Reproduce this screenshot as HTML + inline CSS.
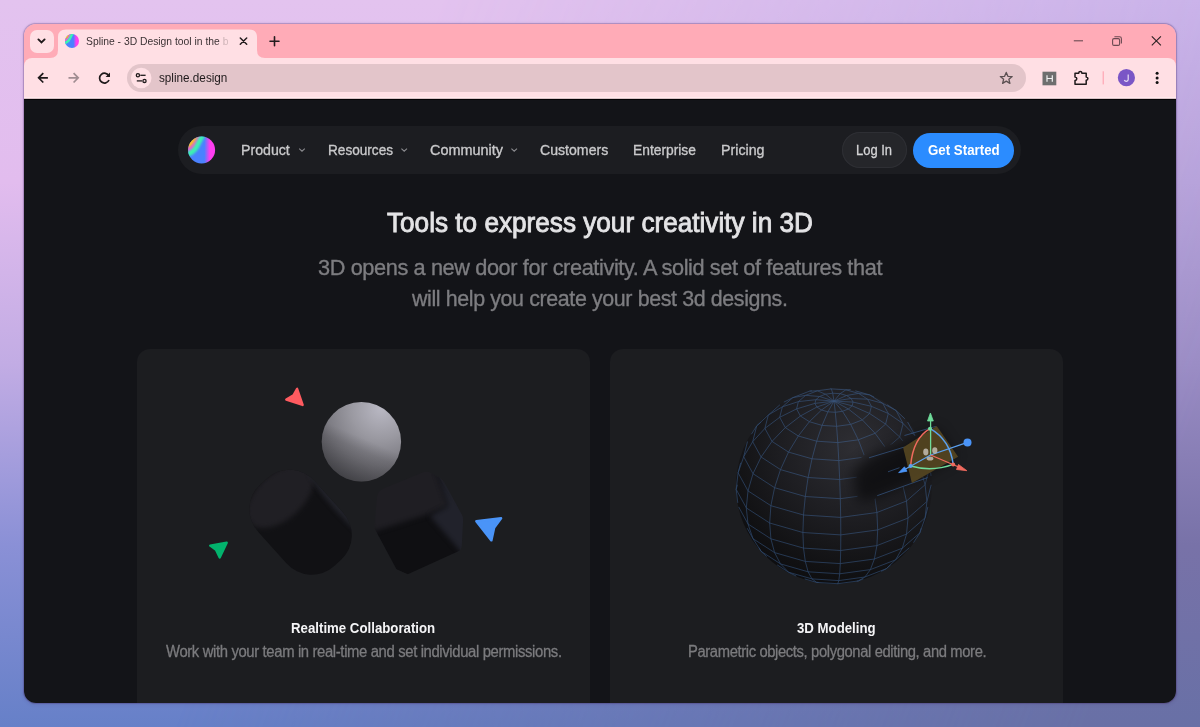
<!DOCTYPE html><html><head><meta charset="utf-8"><style>
html,body{margin:0;padding:0;width:1200px;height:727px;overflow:hidden;font-family:"Liberation Sans",sans-serif;}
.abs{position:absolute;}
.t{position:absolute;white-space:nowrap;transform-origin:0 0;}
#bgL{position:absolute;left:0;top:0;width:1200px;height:727px;background:linear-gradient(to bottom,#e3c3ef 0%,#e2bcee 25%,#c2ace4 50%,#8a90d6 75%,#6680c8 100%);}
#bgR{position:absolute;left:0;top:0;width:1200px;height:727px;background:linear-gradient(to bottom,#c5b0e8 0%,#b2a0d8 25%,#9a8cc4 50%,#7872a8 75%,#6870a6 100%);-webkit-mask-image:linear-gradient(110deg,transparent 30%,#000 92%);mask-image:linear-gradient(110deg,transparent 30%,#000 92%);}
#shadow{position:absolute;left:24px;top:24px;width:1152px;height:679px;border-radius:12px;box-shadow:0 0 1px 0.5px rgba(70,40,100,.3),0 1px 4px rgba(60,40,90,.15);}
#win{position:absolute;left:0;top:0;width:1200px;height:727px;clip-path:inset(24px 24px 24px 24px round 12px);}
#tabstrip{left:24px;top:24px;width:1152px;height:44px;background:#ffabb7;}
#toolbar{left:24px;top:58px;width:1152px;height:41px;border-radius:8px 8px 0 0;background:linear-gradient(to bottom,#ffdfe4 0,#ffdfe4 39px,#ffe9ec 39px,#ffe9ec 40px,#d8c0c4 40px);}
#content{left:24px;top:99px;width:1152px;height:604px;background:#131418;border-top:1px solid #030304;box-sizing:border-box;}
#addr{left:127px;top:64px;width:899px;height:28px;border-radius:14px;background:#e3c5ca;}
#nav{left:177.5px;top:126px;width:843.5px;height:48px;border-radius:24px;background:#1c1d21;}
.card{position:absolute;top:349px;width:453px;height:400px;border-radius:13px;background:#1c1d20;}
</style></head><body><div id="bgL"></div><div id="bgR"></div><div id="shadow"></div><div id="win"><div id="tabstrip" class="abs"></div><div class="abs" style="left:30px;top:29.5px;width:23.5px;height:23.5px;border-radius:7px;background:#ffdfe4;"></div><svg class="abs" style="left:0;top:0" width="300" height="100"><path d="M38.4 39.4 L41.5 42.5 L44.6 39.4" fill="none" stroke="#1f1a1b" stroke-width="1.9" stroke-linecap="round" stroke-linejoin="miter"/></svg><svg class="abs" style="left:0;top:0" width="300" height="100"><path d="M50 58 Q58 58 58 50 L58 37 Q58 29.5 66 29.5 L249 29.5 Q257 29.5 257 37 L257 50 Q257 58 265 58 Z" fill="#ffdfe4"/></svg><div id="toolbar" class="abs"></div><div id="content" class="abs"></div><div id="addr" class="abs"></div><div id="nav" class="abs"></div><div class="card" style="left:137px"></div><div class="card" style="left:610px"></div></div><svg class="abs" style="left:0;top:0" width="1200" height="100"><defs><linearGradient id="fvg" x1="0" y1="0" x2="1" y2="0"><stop offset="0.6" stop-color="#4a82ff"/><stop offset="0.8" stop-color="#ff3ef0"/></linearGradient><clipPath id="fvc"><circle cx="201.6" cy="50" r="13.5"/></clipPath><filter id="fvb" color-interpolation-filters="sRGB"><feGaussianBlur stdDeviation="0.9"/></filter></defs><g transform="translate(72 41) scale(0.52) translate(-201.6 -50)"><circle cx="201.6" cy="50" r="13.5" fill="url(#fvg)"/><g clip-path="url(#fvc)"><g filter="url(#fvb)"><path d="M184 49 Q190 48 193.5 43 Q196 39 199 33 L184 33 Z" fill="#ffc21a"/><path d="M184.5 50.5 Q191.5 49 195 44 Q197.5 40 200.5 34" stroke="#ff4fd8" stroke-width="3" fill="none"/><path d="M184.5 55 Q193 53.5 196.8 46.5 Q199.5 40.5 203.5 34" stroke="#3cf2b2" stroke-width="5" fill="none"/></g></g></g><path d="M240.3 38 L246.7 44.3 M246.7 38 L240.3 44.3" stroke="#231c1e" stroke-width="1.5" stroke-linecap="round"/><path d="M270 41.2 L279 41.2 M274.5 36.7 L274.5 45.7" stroke="#231c1e" stroke-width="1.6" stroke-linecap="round"/><path d="M1073.8 40.8 L1083 40.8" stroke="#6b4a52" stroke-width="1.1"/><rect x="1112.6" y="38.6" width="7" height="6.8" rx="1.4" fill="none" stroke="#6b4a52" stroke-width="1.1"/><path d="M1114.4 36.8 L1119.5 36.8 Q1121.4 36.8 1121.4 38.7 L1121.4 43.6" fill="none" stroke="#6b4a52" stroke-width="1.1"/><path d="M1151.8 36.4 L1160.9 45.4 M1160.9 36.4 L1151.8 45.4" stroke="#2a2022" stroke-width="1.1"/><path d="M38.3 77.8 L47.9 77.8 M43.3 73.2 L38.6 77.8 L43.3 82.5" fill="none" stroke="#1f1a1b" stroke-width="1.7" stroke-linejoin="miter"/><path d="M68.5 77.8 L78.4 77.8 M73.6 73.2 L78.2 77.8 L73.6 82.5" fill="none" stroke="#a18d92" stroke-width="1.7"/><path d="M108.9 76 A4.9 4.9 0 1 0 109 80" fill="none" stroke="#1f1a1b" stroke-width="1.7"/><path d="M110 72.6 L110 77 L105.6 77 Z" fill="#1f1a1b"/><circle cx="141.2" cy="78" r="10.3" fill="#ffe0e5"/><circle cx="137.9" cy="75.3" r="1.6" fill="none" stroke="#1f1a1b" stroke-width="1.3"/><path d="M140.3 75.3 L145.6 75.3" stroke="#1f1a1b" stroke-width="1.3"/><circle cx="144.5" cy="80.9" r="1.6" fill="none" stroke="#1f1a1b" stroke-width="1.3"/><path d="M136.8 80.9 L142.1 80.9" stroke="#1f1a1b" stroke-width="1.3"/><path d="M1006.25 72.4 L1007.9 76.3 L1012.2 76.6 L1008.9 79.3 L1009.9 83.4 L1006.25 81.1 L1002.6 83.4 L1003.6 79.3 L1000.3 76.6 L1004.6 76.3 Z" fill="none" stroke="#5b5052" stroke-width="1.3" stroke-linejoin="round"/><rect x="1042.5" y="71.7" width="13.8" height="13.6" fill="#6e6e6e"/><path d="M1047 75.2 L1047 81.8 M1052.3 75.2 L1052.3 81.8 M1047 78.5 L1052.3 78.5" stroke="#f2f2f2" stroke-width="1.2"/><path d="M1075 73.3 L1078.6 73.3 Q1078.8 71.6 1080.3 71.6 Q1081.8 71.6 1082 73.3 L1086.2 73.3 L1086.2 76.9 Q1087.9 77.1 1087.9 78.6 Q1087.9 80.1 1086.2 80.3 L1086.2 84.3 L1075 84.3 L1075 80.6 Q1076.8 80.4 1076.8 78.8 Q1076.8 77.2 1075 77 Z" fill="none" stroke="#1f1a1b" stroke-width="1.5" stroke-linejoin="round"/><path d="M1103.2 71.3 L1103.2 84.4" stroke="#ff9aaa" stroke-width="1"/><circle cx="1126.4" cy="77.7" r="8.6" fill="#7a56c6"/><path d="M1128.2 74.4 L1128.2 79.6 Q1128.2 81.3 1126.4 81.3 Q1124.8 81.3 1124.4 80" fill="none" stroke="#e6dcf4" stroke-width="1.2"/><circle cx="1157.1" cy="73.2" r="1.5" fill="#111"/><circle cx="1157.1" cy="77.9" r="1.5" fill="#111"/><circle cx="1157.1" cy="82.6" r="1.5" fill="#111"/></svg><span class="t" style="left:85.60px;top:35.46px;font-size:11.63px;line-height:11.63px;font-weight:normal;color:#3b3234;letter-spacing:0px;transform:scaleX(0.8884);-webkit-mask-image:linear-gradient(to right,#000 93%,rgba(0,0,0,.3) 96%,rgba(0,0,0,.2) 100%);">Spline - 3D Design tool in the b</span><span class="t" style="left:158.80px;top:71.85px;font-size:12.94px;line-height:12.94px;font-weight:normal;color:#1f1a1b;letter-spacing:0px;transform:scaleX(0.9054);">spline.design</span><div class="abs" style="left:842px;top:132px;width:65px;height:36px;border-radius:18px;background:#25262a;box-shadow:inset 0 0 0 1px #2e2f34;"></div><div class="abs" style="left:913px;top:133px;width:101px;height:34.5px;border-radius:17.25px;background:#2b8cff;"></div><svg class="abs" style="left:0;top:100px" width="1200" height="100"><defs><linearGradient id="lgg" x1="0" y1="0" x2="1" y2="0"><stop offset="0.6" stop-color="#4a82ff"/><stop offset="0.8" stop-color="#ff3ef0"/></linearGradient><clipPath id="lgc"><circle cx="201.6" cy="50" r="13.5"/></clipPath><filter id="lgb" color-interpolation-filters="sRGB"><feGaussianBlur stdDeviation="0.9"/></filter></defs><circle cx="201.6" cy="50" r="13.5" fill="url(#lgg)"/><g clip-path="url(#lgc)"><g filter="url(#lgb)"><path d="M184 49 Q190 48 193.5 43 Q196 39 199 33 L184 33 Z" fill="#ffc21a"/><path d="M184.5 50.5 Q191.5 49 195 44 Q197.5 40 200.5 34" stroke="#ff4fd8" stroke-width="3" fill="none"/><path d="M184.5 55 Q193 53.5 196.8 46.5 Q199.5 40.5 203.5 34" stroke="#3cf2b2" stroke-width="5" fill="none"/></g></g><path d="M299.2 48.6 L302 51.2 L304.8 48.6 M401.4 48.6 L404.2 51.2 L407 48.6 M511.4 48.6 L514.2 51.2 L517 48.6" fill="none" stroke="#8a8a8e" stroke-width="1.1"/></svg><span class="t" style="left:927.60px;top:143.13px;font-size:14.97px;line-height:14.97px;font-weight:bold;color:#ffffff;letter-spacing:0px;transform:scaleX(0.8885);">Get Started</span><svg class="abs" style="left:0;top:0" width="600" height="703"><defs><radialGradient id="sph" cx="0.75" cy="0.08" r="1.1" fx="0.75" fy="0.08"><stop offset="0" stop-color="#b9b8c3"/><stop offset="0.35" stop-color="#9a99a1"/><stop offset="0.65" stop-color="#7a7980"/><stop offset="1" stop-color="#4c4c52"/></radialGradient><linearGradient id="sphov" x1="0.7" y1="0.04" x2="0.3" y2="0.96"><stop offset="0.45" stop-color="#000" stop-opacity="0"/><stop offset="0.6" stop-color="#000" stop-opacity="0.12"/><stop offset="1" stop-color="#000" stop-opacity="0.26"/></linearGradient><filter id="b2" color-interpolation-filters="sRGB" x="-50%" y="-50%" width="200%" height="200%"><feGaussianBlur stdDeviation="2.5"/></filter><filter id="b05" color-interpolation-filters="sRGB" x="-50%" y="-50%" width="200%" height="200%"><feGaussianBlur stdDeviation="0.5"/></filter><filter id="b1" color-interpolation-filters="sRGB" x="-50%" y="-50%" width="200%" height="200%"><feGaussianBlur stdDeviation="0.8"/></filter><filter id="b6" color-interpolation-filters="sRGB" x="-50%" y="-50%" width="200%" height="200%"><feGaussianBlur stdDeviation="6"/></filter><mask id="cubem"><polygon points="426.2,482.9 434.8,487.7 452.1,519.8 450.8,544.3 410.0,563.4 401.3,559.5 385.4,527.0 387.9,498.7" fill="#fff" stroke="#fff" stroke-width="22" stroke-linejoin="round"/></mask></defs><circle cx="361.4" cy="441.7" r="39.7" fill="url(#sph)"/><circle cx="361.4" cy="441.7" r="39.7" fill="url(#sphov)"/><g filter="url(#b05)"><g transform="translate(300.6 522.2) rotate(48)"><clipPath id="cylc"><rect x="-55" y="-38" width="110" height="76" rx="34" ry="33"/></clipPath><rect x="-55" y="-38" width="110" height="76" rx="34" ry="33" fill="#111114"/><g clip-path="url(#cylc)"><ellipse cx="-33" cy="-2" rx="23" ry="40" fill="#201f24" filter="url(#b2)"/><ellipse cx="15" cy="-40" rx="45" ry="6" fill="#25262e" opacity="0.9" filter="url(#b2)"/></g></g></g><g filter="url(#b05)"><g mask="url(#cubem)"><polygon points="428.3,472.1 439.4,477.7 463.1,518.8 460.0,550.4 407.7,574.2 396.6,569.4 374.5,528.3 379.2,491.9" fill="#0f0f12"/><polygon points="368,488 432,462 448,506 428,514 372,532" fill="#1f1e23" filter="url(#b2)"/><polygon points="436,470 472,520 468,560 430,516 448,506" fill="#21222b" filter="url(#b2)"/></g></g><polygon points="297.1,388.8 293.5,395.3 286.3,399.6 302.6,404.9" fill="#ff5b60" stroke="#ff5b60" stroke-width="2.4" stroke-linejoin="round"/><polygon points="210.2,545.6 226.7,542.7 219.7,557.4 216.0,549.8" fill="#03b36d" stroke="#03b36d" stroke-width="2.4" stroke-linejoin="round"/><polygon points="476.3,521.2 501.1,518.3 494.1,527.9 491.4,540.4" fill="#4a94f8" stroke="#4a94f8" stroke-width="2.4" stroke-linejoin="round"/></svg><svg class="abs" style="left:600px;top:350px" width="400" height="260" viewBox="600 350 400 260"><defs><radialGradient id="wsph" cx="0.6" cy="0.3" r="0.8"><stop offset="0" stop-color="#2e2e33"/><stop offset="0.45" stop-color="#1e1e22"/><stop offset="0.8" stop-color="#111113"/><stop offset="1" stop-color="#0b0b0d"/></radialGradient><filter id="wb4" color-interpolation-filters="sRGB" x="-50%" y="-50%" width="200%" height="200%"><feGaussianBlur stdDeviation="6.5"/></filter><filter id="wb1" color-interpolation-filters="sRGB" x="-50%" y="-50%" width="200%" height="200%"><feGaussianBlur stdDeviation="0.6"/></filter><mask id="occ"><rect x="600" y="350" width="400" height="260" fill="#fff"/><polygon points="856,462 868,452 905,440 937,426 958,457 912,483 878,497 858,508" fill="#000" filter="url(#wb1)"/></mask></defs><circle cx="834" cy="486" r="98" fill="url(#wsph)"/><path d="M835.3 412.3L842.5 411.3M842.5 411.3L848.4 409.0M848.4 409.0L852.1 405.8M852.1 405.8L853.1 402.1M853.1 402.1L851.1 398.5M851.1 398.5L846.5 395.5M846.5 395.5L840.1 393.7M840.1 393.7L832.7 393.2M832.7 393.2L825.5 394.2M825.5 394.2L819.6 396.5M819.6 396.5L815.9 399.7M815.9 399.7L814.9 403.4M814.9 403.4L816.9 407.0M816.9 407.0L821.5 410.0M821.5 410.0L827.9 411.8M827.9 411.8L835.3 412.3M836.6 426.3L850.7 424.4M850.7 424.4L862.3 419.9M862.3 419.9L869.6 413.5M869.6 413.5L871.4 406.3M871.4 406.3L867.6 399.2M867.6 399.2L858.6 393.4M858.6 393.4L845.9 389.8M845.9 389.8L831.4 388.9M831.4 388.9L817.3 390.8M817.3 390.8L805.7 395.3M805.7 395.3L798.4 401.6M798.4 401.6L796.6 408.9M796.6 408.9L800.4 416.0M800.4 416.0L809.4 421.7M809.4 421.7L822.1 425.4M822.1 425.4L836.6 426.3M837.8 442.6L858.3 439.8M858.3 439.8L875.1 433.3M875.1 433.3L885.6 424.1M885.6 424.1L888.3 413.5M888.3 413.5L882.7 403.3M882.7 403.3L869.7 394.9M869.7 394.9L855.3 390.8M812.0 390.8L809.7 391.1M809.7 391.1L792.9 397.6M792.9 397.6L782.4 406.8M782.4 406.8L779.7 417.3M779.7 417.3L785.3 427.6M785.3 427.6L798.3 436.0M798.3 436.0L816.7 441.2M816.7 441.2L837.8 442.6M838.8 460.6L864.9 457.0M864.9 457.0L886.3 448.7M886.3 448.7L899.7 437.0M899.7 437.0L903.1 423.6M903.1 423.6L896.0 410.5M896.0 410.5L887.2 404.8M779.9 404.8L768.3 415.0M768.3 415.0L764.9 428.4M764.9 428.4L772.0 441.4M772.0 441.4L788.5 452.1M788.5 452.1L812.0 458.8M812.0 458.8L838.8 460.6M839.7 479.5L870.4 475.3M870.4 475.3L895.5 465.6M895.5 465.6L911.3 451.8M911.3 451.8L915.3 436.0M915.3 436.0L907.6 422.0M761.2 422.0L756.7 425.9M756.7 425.9L752.7 441.7M752.7 441.7L761.1 457.0M761.1 457.0L780.5 469.6M780.5 469.6L808.1 477.5M808.1 477.5L839.7 479.5M840.3 498.7L874.4 494.0M874.4 494.0L902.3 483.2M902.3 483.2L919.9 467.9M919.9 467.9L924.3 450.4M924.3 450.4L919.5 441.5M747.5 441.5L743.7 456.7M743.7 456.7L753.0 473.7M753.0 473.7L774.6 487.7M774.6 487.7L805.3 496.5M805.3 496.5L840.3 498.7M840.7 517.4L876.9 512.5M876.9 512.5L906.5 501.0M906.5 501.0L925.1 484.7M925.1 484.7L929.9 466.1M929.9 466.1L928.1 462.8M740.7 462.8L738.1 472.8M738.1 472.8L748.0 490.9M748.0 490.9L770.9 505.7M770.9 505.7L803.5 515.0M803.5 515.0L840.7 517.4M840.8 534.9L877.7 529.9M877.7 529.9L908.0 518.1M908.0 518.1L926.9 501.5M926.9 501.5L931.2 484.8M737.4 484.8L736.2 489.4M736.2 489.4L746.3 507.9M746.3 507.9L769.7 523.0M769.7 523.0L802.9 532.5M802.9 532.5L840.8 534.9M840.7 550.5L876.9 545.6M876.9 545.6L906.5 534.1M906.5 534.1L925.1 517.8M925.1 517.8L927.9 506.9M738.7 506.9L748.0 524.0M748.0 524.0L770.9 538.8M770.9 538.8L803.5 548.1M803.5 548.1L840.7 550.5M840.3 563.6L874.4 559.0M874.4 559.0L902.3 548.2M902.3 548.2L919.9 532.8M919.9 532.8L921.1 528.2M747.2 528.2L753.0 538.7M753.0 538.7L774.6 552.6M774.6 552.6L805.3 561.4M805.3 561.4L840.3 563.6M839.7 573.8L870.4 569.6M870.4 569.6L895.5 559.9M895.5 559.9L909.4 547.7M759.1 547.7L761.1 551.3M761.1 551.3L780.5 563.9M780.5 563.9L808.1 571.8M808.1 571.8L839.7 573.8M838.8 580.6L864.9 577.0M864.9 577.0L886.3 568.7M886.3 568.7L890.7 564.9M777.2 564.9L788.5 572.2M788.5 572.2L812.0 578.9M812.0 578.9L838.8 580.6M837.8 583.7L858.3 580.9M858.3 580.9L863.4 578.9M804.7 578.9L816.7 582.4M816.7 582.4L837.8 583.7M834.0 401.1L835.3 412.3M835.3 412.3L836.6 426.3M836.6 426.3L837.8 442.6M837.8 442.6L838.8 460.6M838.8 460.6L839.7 479.5M839.7 479.5L840.3 498.7M840.3 498.7L840.7 517.4M840.7 517.4L840.8 534.9M840.8 534.9L840.7 550.5M840.7 550.5L840.3 563.6M840.3 563.6L839.7 573.8M839.7 573.8L838.8 580.6M838.8 580.6L837.8 583.7M837.8 583.7L837.3 583.5M834.0 401.1L842.5 411.3M842.5 411.3L850.7 424.4M850.7 424.4L858.3 439.8M858.3 439.8L864.9 457.0M864.9 457.0L870.4 475.3M870.4 475.3L874.4 494.0M874.4 494.0L876.9 512.5M876.9 512.5L877.7 529.9M877.7 529.9L876.9 545.6M876.9 545.6L874.4 559.0M874.4 559.0L870.4 569.6M870.4 569.6L864.9 577.0M864.9 577.0L858.3 580.9M858.3 580.9L856.8 581.0M834.0 401.1L848.4 409.0M848.4 409.0L862.3 419.9M862.3 419.9L875.1 433.3M875.1 433.3L886.3 448.7M886.3 448.7L895.5 465.6M895.5 465.6L902.3 483.2M902.3 483.2L906.5 501.0M906.5 501.0L908.0 518.1M908.0 518.1L906.5 534.1M906.5 534.1L902.3 548.2M902.3 548.2L895.5 559.9M895.5 559.9L886.3 568.7M886.3 568.7L881.1 571.4M834.0 401.1L852.1 405.8M852.1 405.8L869.6 413.5M869.6 413.5L885.6 424.1M885.6 424.1L899.7 437.0M899.7 437.0L911.3 451.8M911.3 451.8L919.9 467.9M919.9 467.9L925.1 484.7M925.1 484.7L926.9 501.5M926.9 501.5L925.1 517.8M925.1 517.8L919.9 532.8M919.9 532.8L913.5 542.7M834.0 401.1L853.1 402.1M853.1 402.1L871.4 406.3M871.4 406.3L888.3 413.5M888.3 413.5L903.1 423.6M903.1 423.6L915.3 436.0M915.3 436.0L924.3 450.4M924.3 450.4L929.9 466.1M929.9 466.1L931.0 475.9M834.0 401.1L851.1 398.5M851.1 398.5L867.6 399.2M867.6 399.2L882.7 403.3M882.7 403.3L896.0 410.5M896.0 410.5L904.9 418.8M834.0 401.1L846.5 395.5M846.5 395.5L858.6 393.4M858.6 393.4L869.7 394.9M869.7 394.9L874.1 397.1M834.0 401.1L840.1 393.7M840.1 393.7L845.9 389.8M845.9 389.8L850.7 389.6M834.0 401.1L832.7 393.2M832.7 393.2L831.4 388.9M831.4 388.9L830.5 388.4M834.0 401.1L825.5 394.2M825.5 394.2L817.3 390.8M817.3 390.8L809.7 391.1M809.7 391.1L809.5 391.2M834.0 401.1L819.6 396.5M819.6 396.5L805.7 395.3M805.7 395.3L792.9 397.6M792.9 397.6L783.8 402.2M834.0 401.1L815.9 399.7M815.9 399.7L798.4 401.6M798.4 401.6L782.4 406.8M782.4 406.8L768.3 415.0M768.3 415.0L756.7 425.9M756.7 425.9L751.4 434.2M834.0 401.1L814.9 403.4M814.9 403.4L796.6 408.9M796.6 408.9L779.7 417.3M779.7 417.3L764.9 428.4M764.9 428.4L752.7 441.7M752.7 441.7L743.7 456.7M743.7 456.7L738.1 472.8M738.1 472.8L736.2 489.4M736.2 489.4L737.8 502.9M834.0 401.1L816.9 407.0M816.9 407.0L800.4 416.0M800.4 416.0L785.3 427.6M785.3 427.6L772.0 441.4M772.0 441.4L761.1 457.0M761.1 457.0L753.0 473.7M753.0 473.7L748.0 490.9M748.0 490.9L746.3 507.9M746.3 507.9L748.0 524.0M748.0 524.0L753.0 538.7M753.0 538.7L761.1 551.3M761.1 551.3L766.7 556.6M834.0 401.1L821.5 410.0M821.5 410.0L809.4 421.7M809.4 421.7L798.3 436.0M798.3 436.0L788.5 452.1M788.5 452.1L780.5 469.6M780.5 469.6L774.6 487.7M774.6 487.7L770.9 505.7M770.9 505.7L769.7 523.0M769.7 523.0L770.9 538.8M770.9 538.8L774.6 552.6M774.6 552.6L780.5 563.9M780.5 563.9L788.5 572.2M788.5 572.2L796.3 576.1M834.0 401.1L827.9 411.8M827.9 411.8L822.1 425.4M822.1 425.4L816.7 441.2M816.7 441.2L812.0 458.8M812.0 458.8L808.1 477.5M808.1 477.5L805.3 496.5M805.3 496.5L803.5 515.0M803.5 515.0L802.9 532.5M802.9 532.5L803.5 548.1M803.5 548.1L805.3 561.4M805.3 561.4L808.1 571.8M808.1 571.8L812.0 578.9M812.0 578.9L816.7 582.4M816.7 582.4L818.5 582.3" stroke="#4a7cc0" stroke-width="0.7" fill="none" opacity="0.52" mask="url(#occ)"/><polygon points="852,472 872,455 905,442 937,428 956,457 912,482 880,498 858,503" fill="#0c0c0e" filter="url(#wb4)" opacity="0.8"/><path d="M869 457.8 L904.5 447 M904.5 435.5 L935.8 426.4 M877.2 495.7 L927.6 477.6 M888 471.8 L899.5 467.7" stroke="#3f6aa3" stroke-width="0.8" opacity="0.7"/><polygon points="903.1,447.4 936.7,425.9 958.1,456.7 911.9,483.1" fill="#5b4a22" opacity="0.85"/><path d="M930.2 428.7 Q913 438 910.6 466" stroke="#f06a5e" stroke-width="1.5" fill="none"/><path d="M930.2 428.7 Q950 440 953.2 464.4" stroke="#5aa0f0" stroke-width="1.5" fill="none"/><path d="M910.6 466 Q932 472 953.2 464.4" stroke="#6fdc9a" stroke-width="1.5" fill="none"/><path d="M930.6 455 L930.6 420" stroke="#6fdc9a" stroke-width="1.3"/><path d="M927.5 421 L930.4 413 L933.3 421 Z" fill="#6fdc9a" stroke="#6fdc9a" stroke-width="0.8" stroke-linejoin="round"/><path d="M902 471 L930.6 455 L967.5 442.4" stroke="#5aa0f0" stroke-width="1.3" fill="none"/><circle cx="967.5" cy="442.4" r="4" fill="#4a94f8"/><path d="M898.7 472.7 L904.5 466.8 L907 471.2 Z" fill="#4a94f8" stroke="#4a94f8" stroke-width="0.8" stroke-linejoin="round"/><path d="M930.6 455 L961 468" stroke="#f06a5e" stroke-width="1.3"/><path d="M958.5 464.5 L966.9 470.7 L956.5 469.5 Z" fill="#f06a5e" stroke="#f06a5e" stroke-width="0.8" stroke-linejoin="round"/><circle cx="930" cy="428.7" r="2" fill="#6fdc9a"/><circle cx="910.6" cy="466" r="2" fill="#5aa0f0"/><circle cx="953.2" cy="464.4" r="2" fill="#f06a5e"/><ellipse cx="925.8" cy="452" rx="2.6" ry="3.4" fill="#c4beb4" opacity="0.85"/><ellipse cx="934.8" cy="450.5" rx="2.6" ry="3.2" fill="#c4beb4" opacity="0.85"/><ellipse cx="930" cy="458.6" rx="3.4" ry="2" fill="#c4beb4" opacity="0.85"/></svg><span class="t" style="left:241.25px;top:142.26px;font-size:15.41px;line-height:15.41px;font-weight:normal;color:#c9c9cb;letter-spacing:0px;transform:scaleX(0.9185);-webkit-text-stroke:0.35px #c9c9cb;">Product</span><span class="t" style="left:327.50px;top:142.26px;font-size:15.41px;line-height:15.41px;font-weight:normal;color:#c9c9cb;letter-spacing:0px;transform:scaleX(0.8826);-webkit-text-stroke:0.35px #c9c9cb;">Resources</span><span class="t" style="left:429.50px;top:142.26px;font-size:15.41px;line-height:15.41px;font-weight:normal;color:#c9c9cb;letter-spacing:0px;transform:scaleX(0.9373);-webkit-text-stroke:0.35px #c9c9cb;">Community</span><span class="t" style="left:540.00px;top:142.26px;font-size:15.41px;line-height:15.41px;font-weight:normal;color:#c9c9cb;letter-spacing:0px;transform:scaleX(0.9162);-webkit-text-stroke:0.35px #c9c9cb;">Customers</span><span class="t" style="left:633.25px;top:142.26px;font-size:15.41px;line-height:15.41px;font-weight:normal;color:#c9c9cb;letter-spacing:0px;transform:scaleX(0.8967);-webkit-text-stroke:0.35px #c9c9cb;">Enterprise</span><span class="t" style="left:720.75px;top:142.26px;font-size:15.41px;line-height:15.41px;font-weight:normal;color:#c9c9cb;letter-spacing:0px;transform:scaleX(0.9242);-webkit-text-stroke:0.35px #c9c9cb;">Pricing</span><span class="t" style="left:856.00px;top:143.13px;font-size:14.97px;line-height:14.97px;font-weight:normal;color:#d4d4d6;letter-spacing:0px;transform:scaleX(0.8650);-webkit-text-stroke:0.3px #d4d4d6;">Log In</span><span class="t" style="left:387.30px;top:209.25px;font-size:28.05px;line-height:28.05px;font-weight:normal;color:#e4e4e6;letter-spacing:0px;transform:scaleX(0.9325);-webkit-text-stroke:0.9px #e2e2e4;">Tools to express your creativity in 3D</span><span class="t" style="left:317.50px;top:257.28px;font-size:22.00px;line-height:22.00px;font-weight:normal;color:#7d7d80;letter-spacing:-0.4px;transform:scaleX(0.9882);-webkit-text-stroke:0.35px #7d7d80;">3D opens a new door for creativity. A solid set of features that</span><span class="t" style="left:412.11px;top:287.98px;font-size:22.00px;line-height:22.00px;font-weight:normal;color:#7d7d80;letter-spacing:-0.4px;transform:scaleX(0.9739);-webkit-text-stroke:0.35px #7d7d80;">will help you create your best 3d designs.</span><span class="t" style="left:291.40px;top:619.58px;font-size:15.26px;line-height:15.26px;font-weight:bold;color:#f4f4f6;letter-spacing:0px;transform:scaleX(0.8682);">Realtime Collaboration</span><span class="t" style="left:165.70px;top:644.36px;font-size:16.00px;line-height:16.00px;font-weight:normal;color:#7b7b7e;letter-spacing:-0.4px;transform:scaleX(0.9291);-webkit-text-stroke:0.3px #7b7b7e;">Work with your team in real-time and set individual permissions.</span><span class="t" style="left:797.30px;top:619.88px;font-size:15.26px;line-height:15.26px;font-weight:bold;color:#f4f4f6;letter-spacing:0px;transform:scaleX(0.8674);">3D Modeling</span><span class="t" style="left:687.50px;top:644.36px;font-size:16.00px;line-height:16.00px;font-weight:normal;color:#7b7b7e;letter-spacing:-0.4px;transform:scaleX(0.9227);-webkit-text-stroke:0.3px #7b7b7e;">Parametric objects, polygonal editing, and more.</span></body></html>
